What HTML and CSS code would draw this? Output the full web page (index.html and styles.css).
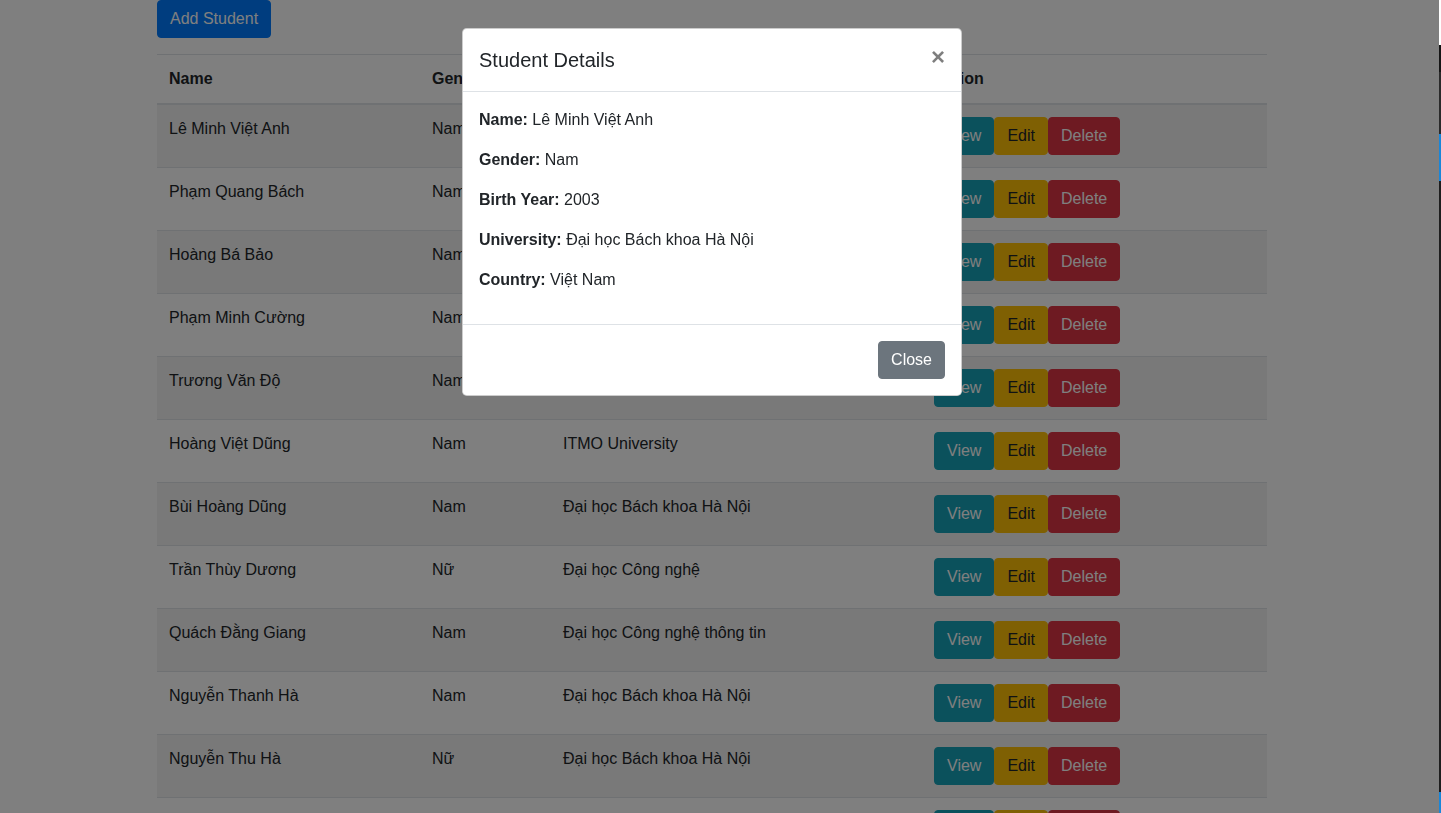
FILE: index.html
```html
<!DOCTYPE html>
<html lang="vi">
<head>
<meta charset="utf-8">
<title>Students</title>
<link rel="stylesheet" href="styles.css">
</head>
<body>
<div class="container">
  <button class="btn btn-primary add-btn">Add Student</button>
  <table class="table">
    <colgroup>
      <col class="c-name"><col class="c-gender"><col class="c-uni"><col class="c-action">
    </colgroup>
    <thead>
      <tr><th>Name</th><th>Gender</th><th>University</th><th>Action</th></tr>
    </thead>
    <tbody>
      <tr><td>Lê Minh Việt Anh</td><td>Nam</td><td>Đại học Bách khoa Hà Nội</td><td><div class="actions"><button class="btn btn-info">View</button><button class="btn btn-warning">Edit</button><button class="btn btn-danger">Delete</button></div></td></tr>
      <tr><td>Phạm Quang Bách</td><td>Nam</td><td>Đại học Bách khoa Hà Nội</td><td><div class="actions"><button class="btn btn-info">View</button><button class="btn btn-warning">Edit</button><button class="btn btn-danger">Delete</button></div></td></tr>
      <tr><td>Hoàng Bá Bảo</td><td>Nam</td><td>Đại học Bách khoa Hà Nội</td><td><div class="actions"><button class="btn btn-info">View</button><button class="btn btn-warning">Edit</button><button class="btn btn-danger">Delete</button></div></td></tr>
      <tr><td>Phạm Minh Cường</td><td>Nam</td><td>Đại học Bách khoa Hà Nội</td><td><div class="actions"><button class="btn btn-info">View</button><button class="btn btn-warning">Edit</button><button class="btn btn-danger">Delete</button></div></td></tr>
      <tr><td>Trương Văn Độ</td><td>Nam</td><td>Đại học Bách khoa Hà Nội</td><td><div class="actions"><button class="btn btn-info">View</button><button class="btn btn-warning">Edit</button><button class="btn btn-danger">Delete</button></div></td></tr>
      <tr><td>Hoàng Việt Dũng</td><td>Nam</td><td>ITMO University</td><td><div class="actions"><button class="btn btn-info">View</button><button class="btn btn-warning">Edit</button><button class="btn btn-danger">Delete</button></div></td></tr>
      <tr><td>Bùi Hoàng Dũng</td><td>Nam</td><td>Đại học Bách khoa Hà Nội</td><td><div class="actions"><button class="btn btn-info">View</button><button class="btn btn-warning">Edit</button><button class="btn btn-danger">Delete</button></div></td></tr>
      <tr><td>Trần Thùy Dương</td><td>Nữ</td><td>Đại học Công nghệ</td><td><div class="actions"><button class="btn btn-info">View</button><button class="btn btn-warning">Edit</button><button class="btn btn-danger">Delete</button></div></td></tr>
      <tr><td>Quách Đằng Giang</td><td>Nam</td><td>Đại học Công nghệ thông tin</td><td><div class="actions"><button class="btn btn-info">View</button><button class="btn btn-warning">Edit</button><button class="btn btn-danger">Delete</button></div></td></tr>
      <tr><td>Nguyễn Thanh Hà</td><td>Nam</td><td>Đại học Bách khoa Hà Nội</td><td><div class="actions"><button class="btn btn-info">View</button><button class="btn btn-warning">Edit</button><button class="btn btn-danger">Delete</button></div></td></tr>
      <tr><td>Nguyễn Thu Hà</td><td>Nữ</td><td>Đại học Bách khoa Hà Nội</td><td><div class="actions"><button class="btn btn-info">View</button><button class="btn btn-warning">Edit</button><button class="btn btn-danger">Delete</button></div></td></tr>
      <tr><td>Lê Văn Hải</td><td>Nam</td><td>Đại học Bách khoa Hà Nội</td><td><div class="actions"><button class="btn btn-info">View</button><button class="btn btn-warning">Edit</button><button class="btn btn-danger">Delete</button></div></td></tr>
    </tbody>
  </table>
</div>

<div class="backdrop"></div>

<div class="modal">
  <div class="modal-content">
    <div class="modal-header">
      <h5 class="modal-title">Student Details</h5>
      <button class="close" aria-label="Close">×</button>
    </div>
    <div class="modal-body">
      <p><strong>Name:</strong> Lê Minh Việt Anh</p>
      <p><strong>Gender:</strong> Nam</p>
      <p><strong>Birth Year:</strong> 2003</p>
      <p><strong>University:</strong> Đại học Bách khoa Hà Nội</p>
      <p><strong>Country:</strong> Việt Nam</p>
    </div>
    <div class="modal-footer">
      <button class="btn btn-secondary">Close</button>
    </div>
  </div>
</div>

<div class="edge-strip"></div>
</body>
</html>
```

FILE: styles.css
```css
* { box-sizing: border-box; }

html, body {
  margin: 0;
  height: 100%;
}

body {
  font-family: "Liberation Sans", Arial, sans-serif;
  font-size: 16px;
  line-height: 1.5;
  color: #212529;
  background: #fff;
  overflow: hidden;
  padding-right: 17px;
}

.container {
  max-width: 1140px;
  margin: 0 auto;
  padding: 0 15px;
}

.btn {
  display: inline-block;
  font-family: inherit;
  font-size: 16px;
  line-height: 1.5;
  font-weight: 400;
  padding: 6px 12px;
  border: 1px solid transparent;
  border-radius: 4px;
  color: #fff;
  cursor: pointer;
  margin: 0;
}

.btn-primary { background: #007bff; border-color: #007bff; }
.btn-info { background: #17a2b8; border-color: #17a2b8; }
.btn-warning { background: #ffc107; border-color: #ffc107; color: #212529; }
.btn-danger { background: #dc3545; border-color: #dc3545; }
.btn-secondary { background: #6c757d; border-color: #6c757d; }

.add-btn { margin-bottom: 16px; display: block; }

.table {
  width: 100%;
  border-collapse: collapse;
  table-layout: fixed;
  color: #212529;
}

.c-name { width: 263px; }
.c-gender { width: 131px; }
.c-uni { width: 371px; }
.c-action { width: 345px; }

.table th,
.table td {
  padding: 12px;
  text-align: left;
  vertical-align: top;
  border-top: 1px solid #dee2e6;
}

.table th { font-weight: 700; }

.table thead th {
  vertical-align: bottom;
  border-bottom: 2px solid #dee2e6;
}

.table tbody tr:nth-child(odd) { background: rgba(0, 0, 0, 0.05); }

.actions { display: flex; }

.backdrop {
  position: fixed;
  inset: 0;
  background: rgba(0, 0, 0, 0.5);
  z-index: 10;
}

.modal {
  position: fixed;
  inset: 0;
  padding-right: 17px;
  z-index: 20;
}

.modal-content {
  width: 500px;
  margin: 28px auto;
  background: #fff;
  border: 1px solid rgba(0, 0, 0, 0.2);
  border-radius: 4.8px;
  display: flex;
  flex-direction: column;
}

.modal-header {
  display: flex;
  align-items: flex-start;
  justify-content: space-between;
  padding: 16px;
  border-bottom: 1px solid #dee2e6;
}

.modal-title {
  margin: 0;
  font-size: 20px;
  font-weight: 500;
  line-height: 1.5;
}

.close {
  background: transparent;
  border: 0;
  padding: 16px;
  margin: -16px -16px -16px auto;
  font-family: inherit;
  font-size: 24px;
  font-weight: 700;
  line-height: 1;
  color: #000;
  opacity: 0.5;
  text-shadow: 0 1px 0 #fff;
  cursor: pointer;
}

.modal-body { padding: 16px; }

.modal-body p { margin: 0 0 16px; }

.modal-footer {
  display: flex;
  justify-content: flex-end;
  padding: 12px;
  border-top: 1px solid #dee2e6;
}

.modal-footer .btn { margin: 4px; }

.edge-strip {
  position: fixed;
  top: 0;
  right: 0;
  width: 2px;
  height: 100%;
  z-index: 30;
  background: linear-gradient(to bottom,
    #ffffff 0, #ffffff 45px,
    #151515 45px, #151515 72px,
    #2a2a2a 72px, #2a2a2a 134px,
    #1a86d8 134px, #1a86d8 181px,
    #1e1e1e 181px, #1e1e1e 792px,
    #1a86d8 792px, #1a86d8 100%);
}
```
